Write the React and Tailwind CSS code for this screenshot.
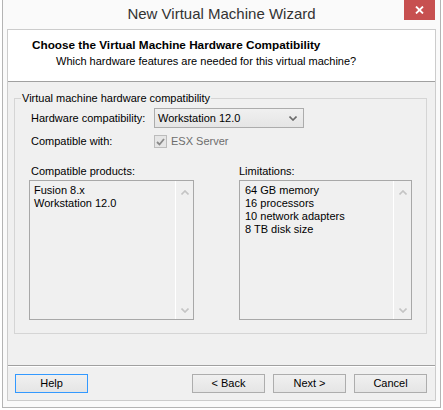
import React from "react";

function Chevron({ dir = "down", color = "#c4c4c4" }) {
  return (
    <svg width="8" height="5" viewBox="0 0 8 5" className="block">
      {dir === "down" ? (
        <path d="M0.5 0.5 L4 4 L7.5 0.5" fill="none" stroke={color} strokeWidth="1.6" />
      ) : (
        <path d="M0.5 4.5 L4 1 L7.5 4.5" fill="none" stroke={color} strokeWidth="1.6" />
      )}
    </svg>
  );
}

function ListBox({ width, items, pl }) {
  return (
    <div className={`${width} h-[140px] border border-[#a8a8a8] bg-[#f0f0f0] flex`}>
      <div className={`flex-1 pt-[3px] ${pl} leading-[13px] text-black`}>
        {items.map((t) => (
          <div key={t} className="h-[13px] whitespace-nowrap">{t}</div>
        ))}
      </div>
      <div className="w-[18px] border-l border-white flex flex-col items-center justify-between pt-[9px] pb-[6px]">
        <Chevron dir="up" />
        <Chevron dir="down" />
      </div>
    </div>
  );
}

function Button({ children, focused }) {
  return (
    <div
      className={`w-[73px] h-[19px] flex items-center justify-center border ${
        focused ? "border-[#3399ff]" : "border-[#adadad]"
      } bg-gradient-to-b from-[#f0f0f0] to-[#e5e5e5] text-black leading-[13px]`}
    >
      {children}
    </div>
  );
}

export default function App() {
  return (
    <div className="w-[443px] h-[410px] bg-white overflow-hidden font-['Liberation_Sans',Arial,sans-serif] text-[11px]">
      <div className="ml-[2px] w-[439px] h-[408px] border-x border-b border-[#b4b4b4] bg-[#fafafa] flex flex-col relative">
        {/* title bar */}
        <div className="h-[29px] flex items-center justify-center pb-[1px]">
          <span className="text-[15px] text-[#333333] leading-[18px]">New Virtual Machine Wizard</span>
        </div>
        <div className="absolute top-0 right-[5px] w-[31px] h-[20px] bg-[#c75050] flex items-center justify-center">
          <svg width="9" height="8" viewBox="0 0 9 8">
            <path d="M1 0.5 L8 7.5 M8 0.5 L1 7.5" stroke="white" strokeWidth="1.8" />
          </svg>
        </div>

        {/* content */}
        <div className="ml-[4px] w-[429px] h-[372px] border border-[#cccccc] bg-[#f0f0f0] flex flex-col">
          {/* header */}
          <div className="h-[52px] bg-white border-b border-[#a0a0a0] pl-[24px] pt-[7px]">
            <div className="font-bold text-[11.75px] leading-[15px] text-black whitespace-nowrap">
              Choose the Virtual Machine Hardware Compatibility
            </div>
            <div className="mt-[2px] pl-[24px] leading-[15px] text-black whitespace-nowrap">
              Which hardware features are needed for this virtual machine?
            </div>
          </div>

          {/* group box */}
          <div className="mt-[16px] ml-[6px] w-[413px] h-[236px] border border-[#d5d5d5] relative pt-[9px]">
            <span className="absolute top-[-8px] left-[6px] px-[1px] bg-[#f0f0f0] leading-[14px] text-black whitespace-nowrap">
              Virtual machine hardware compatibility
            </span>

            <div className="flex items-center h-[20px] pl-[16px]">
              <span className="w-[123px] shrink-0 whitespace-nowrap text-black">Hardware compatibility:</span>
              <div className="w-[150px] h-[20px] border border-[#acacac] bg-gradient-to-b from-[#f0f0f0] to-[#e5e5e5] flex items-center justify-between pl-[3px] pr-[6px]">
                <span className="text-black whitespace-nowrap">Workstation 12.0</span>
                <Chevron dir="down" color="#6a6a6a" />
              </div>
            </div>

            <div className="mt-[7px] flex items-center h-[13px] pl-[16px]">
              <span className="w-[123px] shrink-0 whitespace-nowrap text-black">Compatible with:</span>
              <div className="w-[13px] h-[13px] border border-[#bcbcbc] bg-[#e6e6e6] flex items-center justify-center">
                <svg width="9" height="8" viewBox="0 0 9 8">
                  <path d="M1 4 L3.5 6.5 L8 1" fill="none" stroke="#8a8a8a" strokeWidth="1.8" />
                </svg>
              </div>
              <span className="ml-[4px] text-[#6d6d6d] whitespace-nowrap">ESX Server</span>
            </div>

            <div className="mt-[16px] flex pl-[14px] gap-[45px]">
              <div className="w-[165px]">
                <div className="pl-[2px] leading-[14px] text-black whitespace-nowrap">Compatible products:</div>
                <div className="mt-[2px]">
                  <ListBox width="w-[165px]" pl="pl-[4px]" items={["Fusion 8.x", "Workstation 12.0"]} />
                </div>
              </div>
              <div className="w-[173px]">
                <div className="leading-[14px] text-black whitespace-nowrap">Limitations:</div>
                <div className="mt-[2px]">
                  <ListBox
                    width="w-[173px]"
                    pl="pl-[5px]"
                    items={["64 GB memory", "16 processors", "10 network adapters", "8 TB disk size"]}
                  />
                </div>
              </div>
            </div>
          </div>

          {/* footer */}
          <div className="mt-[31px] h-[2px] border-t border-[#a0a0a0] border-b border-b-white" />
          <div className="mt-[7px] flex justify-between pl-[7px] pr-[8px]">
            <Button focused>Help</Button>
            <div className="flex gap-[8px]">
              <Button>&lt; Back</Button>
              <Button>Next &gt;</Button>
              <Button>Cancel</Button>
            </div>
          </div>
        </div>
      </div>
    </div>
  );
}
